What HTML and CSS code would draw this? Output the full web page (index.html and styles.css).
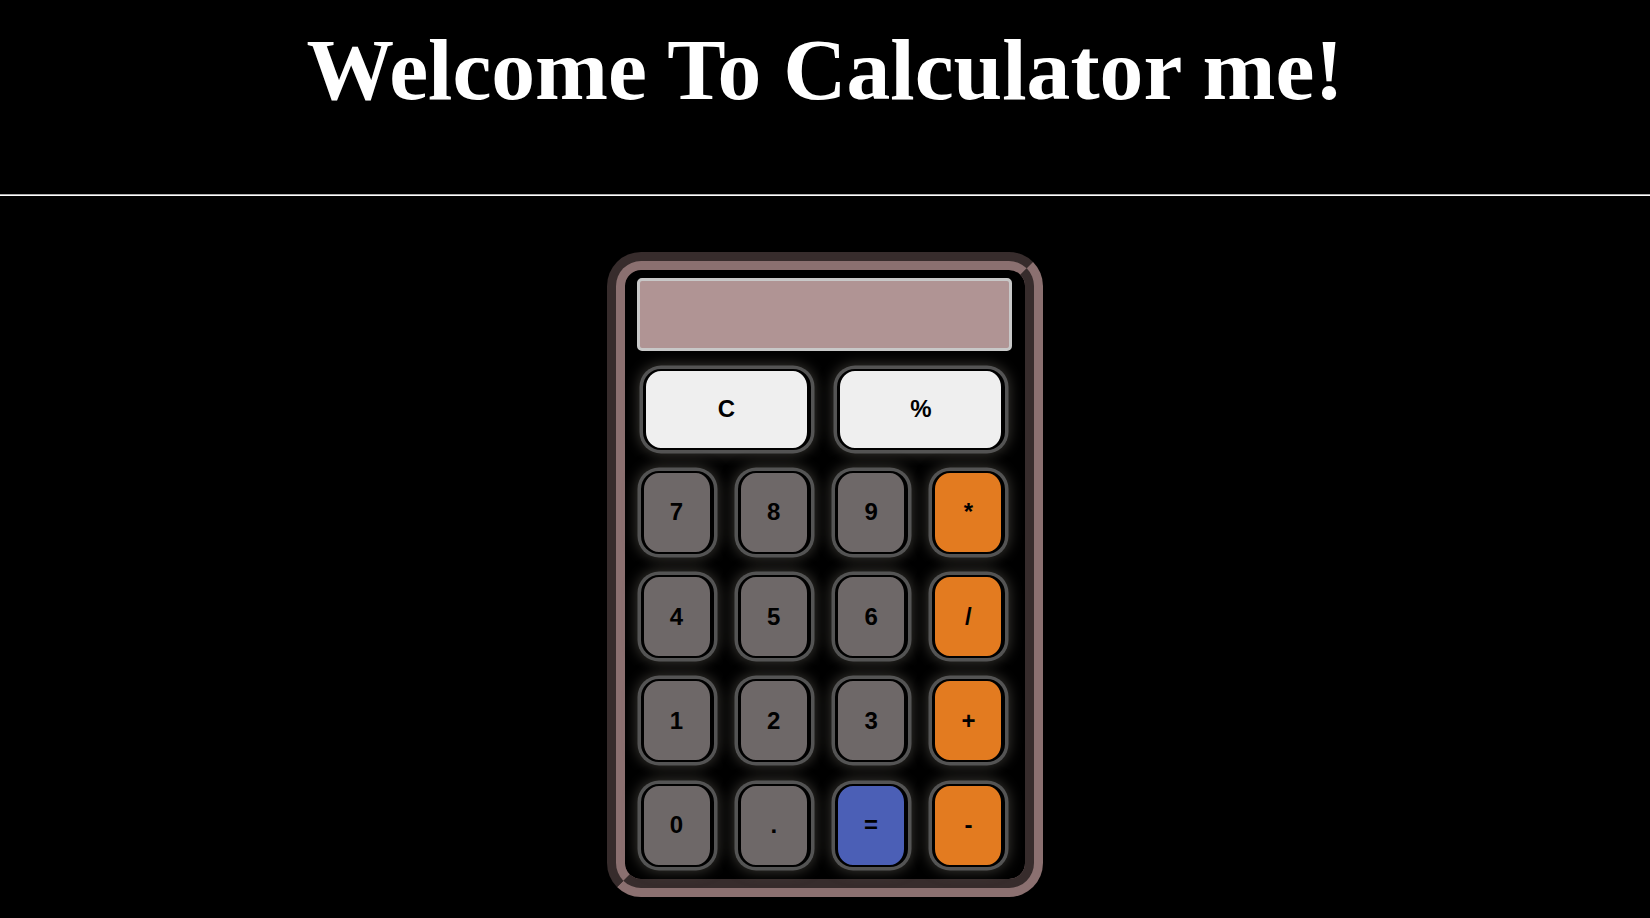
FILE: index.html
```
<!DOCTYPE html>
<html lang="en">
<head>
<meta charset="utf-8">
<title>Calculator</title>
<link rel="stylesheet" href="styles.css">
</head>
<body>
<h1 class="title">Welcome To Calculator me!</h1>
<hr class="divider">
<main class="page">
  <div class="calc">
    <div class="display"></div>
    <div class="keys">
      <button class="key key-wide">C</button>
      <button class="key key-wide">%</button>
      <button class="key key-num">7</button>
      <button class="key key-num">8</button>
      <button class="key key-num">9</button>
      <button class="key key-op">*</button>
      <button class="key key-num">4</button>
      <button class="key key-num">5</button>
      <button class="key key-num">6</button>
      <button class="key key-op">/</button>
      <button class="key key-num">1</button>
      <button class="key key-num">2</button>
      <button class="key key-num">3</button>
      <button class="key key-op">+</button>
      <button class="key key-num">0</button>
      <button class="key key-num">.</button>
      <button class="key key-eq">=</button>
      <button class="key key-op">-</button>
    </div>
  </div>
</main>
</body>
</html>
```
FILE: styles.css
```
html, body {
  margin: 0;
  padding: 0;
  background: #000;
}

body {
  font-family: "Liberation Serif", "Times New Roman", serif;
  color: #fff;
}

.title {
  margin: 20px 0 0;
  font-size: 87.6px;
  line-height: 100px;
  font-weight: bold;
  text-align: center;
  color: #fff;
}

.divider {
  margin: 74px 0 0;
  height: 0;
  border: 0;
  border-top: 1px solid #ababab;
  border-bottom: 1px solid #ffffff;
}

.page {
  display: flex;
  justify-content: center;
  padding-top: 56px;
}

.calc {
  width: 375px;
  padding: 8px 13px 9px 12px;
  border: 18px groove #8b7070;
  border-radius: 34px;
  background: #000;
}

.display {
  box-sizing: border-box;
  width: 375px;
  height: 73px;
  border: 3px solid #c8c8c8;
  border-radius: 5px;
  background: #b09494;
}

.keys {
  display: grid;
  grid-template-columns: repeat(4, 80px);
  grid-template-rows: 88px repeat(4, 90px);
  column-gap: 17.3px;
  row-gap: 14.3px;
  margin-top: 14px;
}

.key {
  box-sizing: border-box;
  width: 73px;
  height: calc(100% - 7px);
  margin: 3.5px;
  padding: 0;
  border-style: solid;
  border-color: #000;
  border-width: 2px 4px 2.5px 3px;
  border-radius: 18px;
  font-family: "Liberation Sans", Arial, sans-serif;
  font-size: 24px;
  font-weight: bold;
  color: #000;
  box-shadow: 0 0 0 3.5px #545454, 0 0 14px 4px rgba(120, 115, 105, 0.5);
  cursor: pointer;
}

.key-wide {
  grid-column: span 2;
  width: 168px;
  justify-self: end;
  background: #efefef;
}

.key-num {
  background: #6e6868;
}

.key-op {
  background: #e37b20;
}

.key-eq {
  background: #4b5fb6;
}
```
